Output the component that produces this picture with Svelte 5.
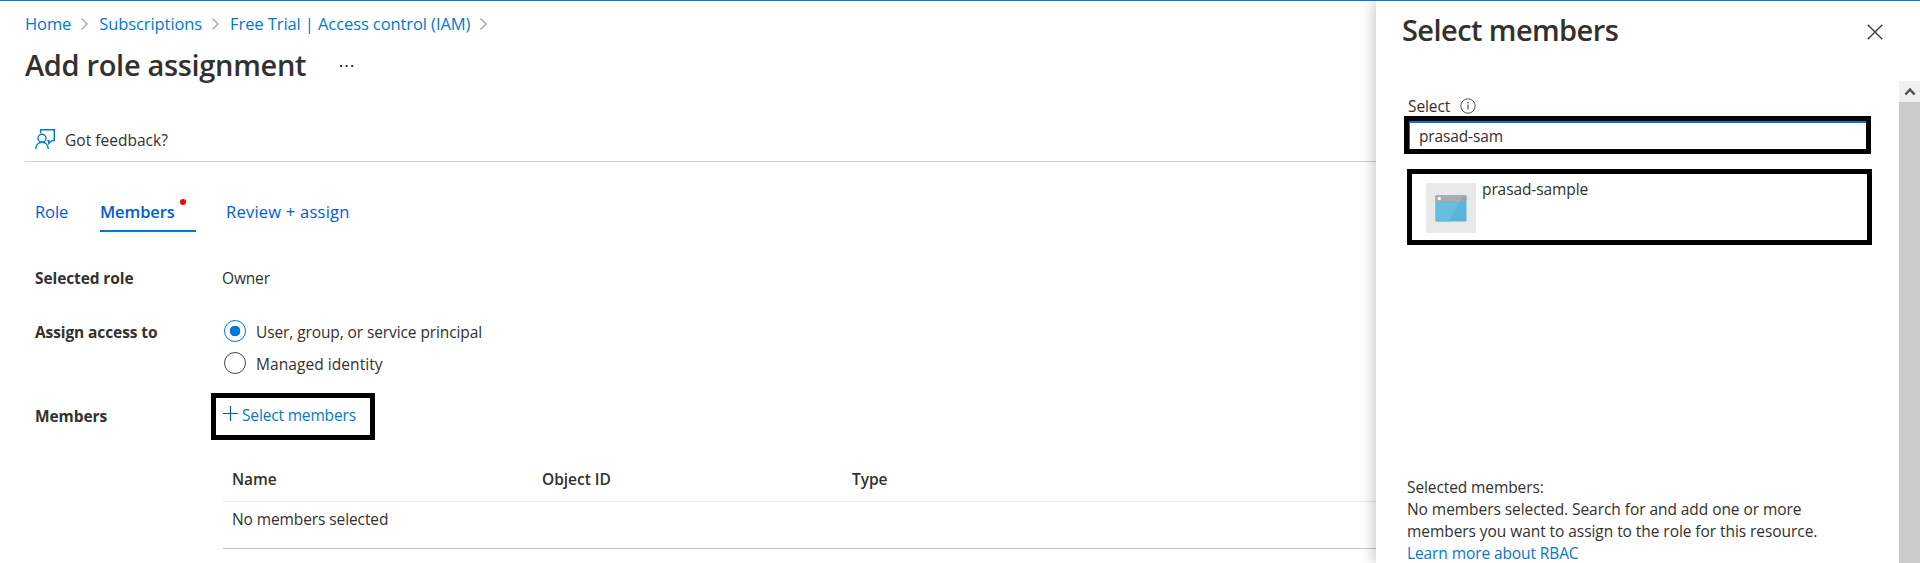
<script>
  const crumbs = ['Home', 'Subscriptions', 'Free Trial | Access control (IAM)'];
  const columns = ['Name', 'Object ID', 'Type'];
  let access = $state('user');
  let query = $state('prasad-sam');
</script>

<div class="shell">
  <main class="page">
    <nav class="crumbs">
      {#each crumbs as crumb}
        <a class="link">{crumb}</a>
        <svg class="chev" width="9" height="14" viewBox="0 0 9 14"><path d="M1.5 1.5 7 7l-5.5 5.5" fill="none" stroke="#a6a6a6" stroke-width="1.4" /></svg>
      {/each}
    </nav>

    <header class="heading">
      <h1>Add role assignment</h1>
      <svg width="15" height="4" viewBox="0 0 15 4" fill="#333"><rect x="1" y="1" width="2" height="2" /><rect x="6.6" y="1" width="2" height="2" /><rect x="12.2" y="1" width="2" height="2" /></svg>
    </header>

    <div class="toolbar">
      <svg width="20" height="21" viewBox="0 0 20 21" fill="none" stroke="#0078d4" stroke-width="1.4">
        <path d="M5.600 4V.8h13.700v10.800h-2.600l-2.900 2.900v-2.900h-1.600" />
        <circle cx="7" cy="9.2" r="4" />
        <path d="M.7 20c.2-4 2.800-6.700 6.300-6.700s6.100 2.700 6.300 6.700" />
      </svg>
      <span>Got feedback?</span>
    </div>

    <div class="tabs">
      <a class="tab">Role</a>
      <a class="tab active">Members<i class="dot"></i></a>
      <a class="tab review">Review + assign</a>
    </div>

    <section class="form">
      <div class="row">
        <b>Selected role</b>
        <span class="owner">Owner</span>
      </div>
      <div class="row access">
        <b>Assign access to</b>
        <div class="radios">
          <label class="option"><input type="radio" value="user" bind:group={access} /><span>User, group, or service principal</span></label>
          <label class="option managed"><input type="radio" value="managed" bind:group={access} /><span>Managed identity</span></label>
        </div>
      </div>
      <div class="row members">
        <b>Members</b>
        <a class="add">
          <svg width="15" height="15" viewBox="0 0 15 15"><path d="M7.500 0v15M0 7.500h15" stroke="#015cda" stroke-width="1.2" /></svg>
          <span>Select members</span>
        </a>
      </div>
    </section>

    <div class="table">
      <div class="thead">
        {#each columns as column}<span>{column}</span>{/each}
      </div>
      <div class="empty">No members selected</div>
    </div>
  </main>

  <aside class="panel">
    <header class="panel-head">
      <h2>Select members</h2>
      <svg width="16" height="16" viewBox="0 0 16 16"><path d="M.7.7l14.600 14.600M15.300.7.7 15.300" stroke="#333" stroke-width="1.3" /></svg>
    </header>
    <div class="panel-body">
      <div class="content">
        <div class="label">
          <span>Select</span>
          <svg width="16" height="16" viewBox="0 0 16 16"><circle cx="8" cy="8" r="7.200" fill="none" stroke="#555" /><path d="M8 6.500v5" stroke="#444" stroke-width="1.1" /><circle cx="8" cy="4.600" r=".8" fill="#444" /></svg>
        </div>
        <div class="search"><input type="text" bind:value={query} /></div>
        <div class="result">
          <div class="avatar">
            <svg width="32" height="27" viewBox="0 0 32 27">
              <rect x=".5" y=".5" width="31" height="26" rx="1" fill="#59b4d9" />
              <path d="M.5 6.500h24.300L14 26.500H1.500a1 1 0 0 1-1-1z" fill="#69bcdd" />
              <path d="M.5 6.500v-5a1 1 0 0 1 1-1h29a1 1 0 0 1 1 1v5z" fill="#a0a1a2" />
              <path d="M.5 6.500v-5a1 1 0 0 1 1-1h26.600L24.800 6.500z" fill="#aaabac" />
              <circle cx="4.300" cy="3.600" r="1.700" fill="#fff" />
            </svg>
          </div>
          <span>prasad-sample</span>
        </div>
        <div class="summary">
          <p>Selected members:</p>
          <p class="note">No members selected. Search for and add one or more<br />members you want to assign to the role for this resource.</p>
          <a class="link">Learn more about RBAC</a>
        </div>
      </div>
      <div class="scroll">
        <div class="up"><svg width="12" height="9" viewBox="0 0 12 9"><path d="M1.400 7.500 6 2.500l4.600 5" fill="none" stroke="#505050" stroke-width="2.500" /></svg></div>
      </div>
    </div>
  </aside>
</div>

<style>
  :global(body) { background: #fff; overflow: hidden; }
  .shell, .shell * { box-sizing: border-box; }
  .shell {
    display: grid;
    grid-template-columns: 1376px 544px;
    height: 563px;
    overflow: hidden;
    border-top: 1px solid #0078d4;
    font: 15.5px/22px "Open Sans", "Noto Sans", sans-serif;
    letter-spacing: -0.1px;
    color: #323130;
  }
  h1, h2, p { margin: 0; }
  a { text-decoration: none; cursor: pointer; }
  svg { flex: none; display: block; }
  .link { color: #0078d4; }

  .page { padding: 11px 0 0 25px; min-width: 0; }
  .crumbs { display: flex; align-items: center; height: 24px; font-size: 16.5px; line-height: 24px; letter-spacing: -0.09px; }
  .chev { margin: 0 10px 0 9px; }
  .heading { display: flex; align-items: center; gap: 33px; margin-top: 9px; height: 40px; }
  .heading svg { margin-top: 2px; }
  h1, h2 { font-weight: 600; font-size: 29px; line-height: 40px; }
  h1 { letter-spacing: -0.32px; }
  h2 { letter-spacing: -0.58px; }
  .toolbar { display: flex; align-items: center; gap: 10px; height: 43px; margin-top: 34px; padding-left: 10px; letter-spacing: 0.02px; border-bottom: 1px solid #d0d0d0; }
  .toolbar svg { margin-top: -2px; }

  .tabs { display: flex; margin: 32px 0 0 10px; font-size: 16.5px; line-height: 36px; letter-spacing: -0.1px; }
  .tab { color: #015cda; height: 38px; }
  .tab.active { position: relative; width: 96px; margin-left: 31px; font-weight: 600; border-bottom: 2px solid #0078d4; }
  .tab:first-child { width: 34px; }
  .dot { position: absolute; left: 80px; top: 5px; width: 6px; height: 6px; border-radius: 50%; background: #f00; }
  .review { margin-left: 30px; letter-spacing: 0.24px; }

  .form { margin: 35px 0 0 10px; }
  .row { display: grid; grid-template-columns: 188px 1fr; }
  .row b { font-weight: 700; }
  .owner { margin-left: -1px; letter-spacing: -0.15px; }
  .access { margin-top: 32px; }
  .radios { display: flex; flex-direction: column; gap: 10px; }
  .option { display: flex; align-items: center; gap: 10px; height: 22px; }
  .option input { appearance: none; width: 22px; height: 22px; margin: -2px 0 0 1px; border: 1px solid #484644; border-radius: 50%; }
  .option input:checked { border-color: #0078d4; background: radial-gradient(circle, #0078d4 5px, transparent 5.6px); }
  .managed { letter-spacing: 0.06px; }
  .members { margin-top: 18px; align-items: start; }
  .members b { margin-top: 12px; }
  .add { display: flex; align-items: flex-start; gap: 4px; width: 164px; height: 47px; margin-left: -12px; padding: 6px 0 0 7px; border: 5px solid #000; color: #0078d4; letter-spacing: -0.16px; }
  .add svg { margin-top: 2px; }

  .table { margin: 17px 0 0 198px; }
  .thead, .empty { padding-left: 9px; }
  .thead { display: grid; grid-template-columns: 310px 310px 1fr; height: 45px; padding-top: 11px; font-weight: 600; letter-spacing: -0.03px; border-bottom: 1px solid #eaeaea; }
  .empty { height: 47px; padding-top: 6px; border-bottom: 1px solid #c8c8c8; }

  .panel { display: flex; flex-direction: column; background: #fff; box-shadow: -2px 0 14px rgba(0, 0, 0, 0.24); position: relative; min-height: 0; }
  .panel-head { display: flex; justify-content: space-between; align-items: flex-start; height: 80px; padding: 9px 37px 0 26px; }
  .panel-head svg { margin-top: 14px; }
  .panel-body { display: flex; flex: 1; min-height: 0; }
  .content { width: 523px; padding: 14px 0 0 28px; }
  .label { display: flex; align-items: center; gap: 10px; height: 21px; padding-left: 4px; }
  .search { width: 467px; height: 38px; border: 5px solid #000; }
  .search input { display: block; width: 100%; height: 28px; border: solid #0078d4; border-width: 2px 0 0 1px; outline: 0; border-radius: 0; padding: 0 0 0 9px; font: inherit; color: inherit; letter-spacing: -0.14px; background: #fff; }
  .result { display: flex; gap: 6px; width: 465px; height: 76px; margin: 15px 0 0 3px; padding: 9px 0 0 14px; border: 5px solid #000; }
  .avatar { display: grid; place-items: center; width: 50px; height: 50px; background: #e8eae9; }
  .result span { margin-top: -5px; }
  .summary { margin: 231px 0 0 3px; white-space: nowrap; }
  .note { letter-spacing: -0.06px; }
  .scroll { width: 21px; background: #cbcbcb; }
  .up { display: grid; place-items: center; height: 21px; background: #f0f0f0; }
</style>
